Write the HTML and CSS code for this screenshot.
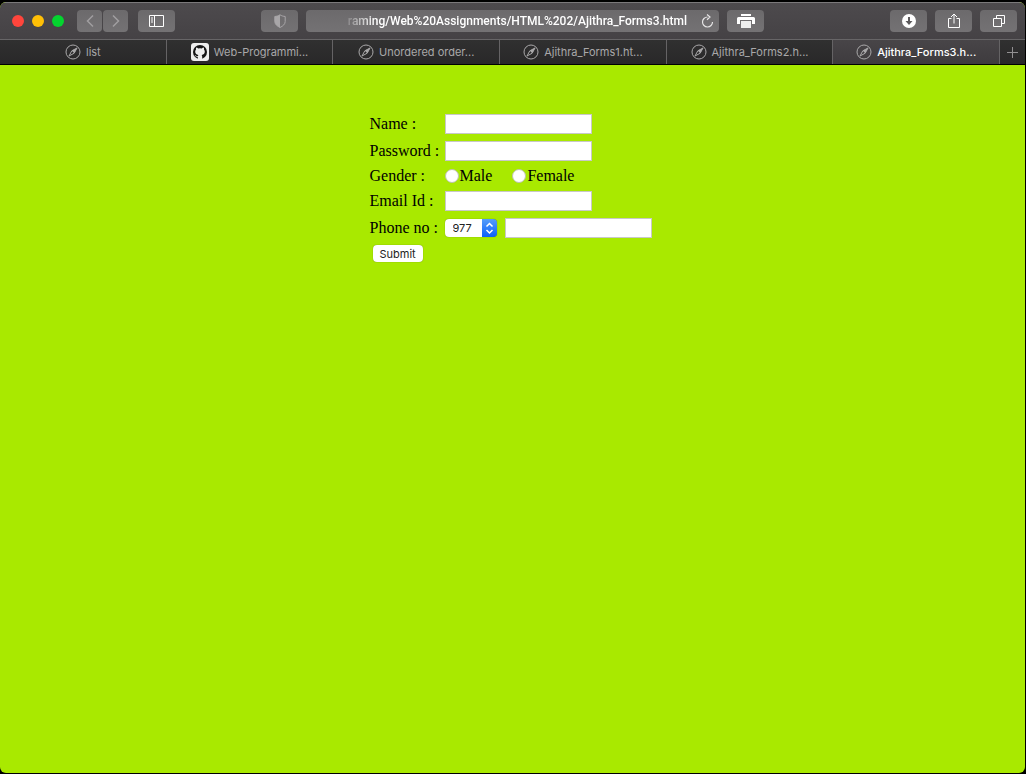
FILE: index.html
```html
<!DOCTYPE html>
<html lang="en">
<head>
<meta charset="utf-8">
<title>Ajithra_Forms3.html</title>
<link rel="stylesheet" href="styles.css">
</head>
<body>
<svg class="defs" aria-hidden="true">
  <symbol id="compass" viewBox="0 0 16 16">
    <circle cx="8" cy="8" r="7" fill="none" stroke="currentColor"/>
    <path d="M12 4 9.2 9.2 4 12 6.8 6.8Z" fill="none" stroke="currentColor"/>
    <path d="M12 4 6.8 6.8 9.2 9.2Z" fill="currentColor"/>
  </symbol>
</svg>
<div class="window">
  <header class="toolbar">
    <div class="group">
      <div class="lights"><span class="light red"></span><span class="light yellow"></span><span class="light green"></span></div>
      <div class="nav">
        <button class="tool nav-tool" aria-label="Back"><svg width="10" height="14" viewBox="0 0 10 14"><path d="M8 1.5 2.5 7 8 12.5" fill="none" stroke="#a09ea0" stroke-width="1.5"/></svg></button>
        <button class="tool nav-tool" aria-label="Forward"><svg width="10" height="14" viewBox="0 0 10 14"><path d="M2 1.5 7.5 7 2 12.5" fill="none" stroke="#a09ea0" stroke-width="1.5"/></svg></button>
      </div>
      <button class="tool" aria-label="Sidebar"><svg width="15" height="12" viewBox="0 0 15 12"><path d="M.5.5h14v11H.5zM5.5.5v11M2 3h2M2 5h2M2 7h2" fill="none" stroke="#fff"/></svg></button>
    </div>
    <div class="center">
      <button class="tool" aria-label="Privacy report"><svg width="14" height="14" viewBox="0 0 14 14"><path d="M7 .8c1.6 1.1 3.3 1.5 5.2 1.7v5c0 2.6-2.2 4.6-5.2 6-3-1.4-5.2-3.4-5.2-6v-5C3.7 2.3 5.4 1.9 7 .8Z" fill="none" stroke="#a8a6a8"/><path d="M7 .8C5.4 1.9 3.7 2.3 1.8 2.5v5c0 2.6 2.2 4.6 5.2 6Z" fill="#a8a6a8"/></svg></button>
      <div class="address">
        <span class="url">raming/Web%20Assignments/HTML%202/Ajithra_Forms3.html</span>
        <button class="reload" aria-label="Reload"><svg width="13" height="14" viewBox="0 0 13 14"><path d="M6.5 3A5 5 0 1 0 11.5 8M6 .5 9 3 6 5.8" fill="none" stroke="#e6e5e6" stroke-width="1.2"/></svg></button>
      </div>
      <button class="tool" aria-label="Print"><svg width="18" height="14" viewBox="0 0 18 14"><path d="M4 0h10v2H4zM1.5 3h15q1.5 0 1.5 1.5V10h-3V6H3v4H0V4.5Q0 3 1.5 3Z" fill="#fff"/><path d="M4 7h10v7H4z" fill="#eee"/></svg></button>
    </div>
    <div class="group right">
      <button class="tool" aria-label="Downloads"><svg width="14" height="14" viewBox="0 0 14 14"><circle cx="7" cy="7" r="7" fill="#fff"/><path d="M7 3v5" stroke="#5c5a5c" stroke-width="2"/><path d="M3.5 7h7L7 11Z" fill="#5c5a5c"/></svg></button>
      <button class="tool" aria-label="Share"><svg width="12" height="16" viewBox="0 0 12 16"><path d="M3.5 5.5h-3v9h11v-9h-3M6 10.5V1M3 4l3-3 3 3" fill="none" stroke="#fff"/></svg></button>
      <button class="tool" aria-label="Show all tabs"><svg width="12" height="12" viewBox="0 0 12 12"><path d="M.5 3.5h8v8h-8zM3.5 3V.5h8v8H9" fill="none" stroke="#fff"/></svg></button>
    </div>
  </header>
  <nav class="tabs" aria-label="Tabs">
    <a class="tab" href="#"><svg class="icon"><use href="#compass"/></svg>list</a>
    <a class="tab" href="#"><svg class="github" viewBox="0 0 18 18"><rect width="18" height="18" rx="3" fill="#eee"/><circle cx="9" cy="9" r="7" fill="#141414"/><path d="M6.8 16v-2.2c-2 .3-2.5-1-3.2-1.5 1.3-.2 1.4 1 3.3.7.1-.5.3-.8.5-1C5 11.7 4.2 10.4 4.2 8.500c0-.8.3-1.5.8-2-.2-.8 0-1.5.2-2 .8 0 1.5.5 2 .9a8 8 0 0 1 3.6 0c.5-.4 1.200-.9 2-.9.2.5.4 1.2.2 2 .5.5.8 1.2.8 2 0 1.900-.8 3.200-3.200 3.500.4.4.6.9.6 1.700V16Z" fill="#eee"/></svg>Web-Programmi...</a>
    <a class="tab" href="#"><svg class="icon"><use href="#compass"/></svg>Unordered order...</a>
    <a class="tab" href="#"><svg class="icon"><use href="#compass"/></svg>Ajithra_Forms1.ht...</a>
    <a class="tab" href="#"><svg class="icon"><use href="#compass"/></svg>Ajithra_Forms2.h...</a>
    <a class="tab active" href="#" aria-current="page"><svg class="icon"><use href="#compass"/></svg>Ajithra_Forms3.h...</a>
    <button class="new-tab" aria-label="New tab"><svg width="11" height="11" viewBox="0 0 11 11"><path d="M5.5 0v11M0 5.5h11" stroke="#929092"/></svg></button>
  </nav>
  <main class="page">
    <form class="form">
      <div class="row"><label class="label" for="name">Name :</label><input class="field" id="name" type="text"></div>
      <div class="row"><label class="label" for="password">Password :</label><input class="field" id="password" type="password"></div>
      <div class="row gender" role="radiogroup" aria-labelledby="gender"><span class="label" id="gender">Gender :</span>
        <label class="choice"><input class="radio" type="radio" name="gender">Male</label>
        <label class="choice"><input class="radio" type="radio" name="gender">Female</label>
      </div>
      <div class="row"><label class="label" for="email">Email Id :</label><input class="field" id="email" type="text"></div>
      <div class="row"><label class="label" for="phone">Phone no :</label>
        <select class="code" aria-label="Country code"><option>977</option></select>
        <input class="field" id="phone" type="text">
      </div>
      <div class="row actions"><button class="submit" type="button">Submit</button></div>
    </form>
  </main>
</div>
</body>
</html>
```
FILE: styles.css
```css
* { box-sizing: border-box; }
body { margin: 0; background: #000; font-family: Inter, "Liberation Sans", sans-serif; }
button, input, select { margin: 0; font-family: inherit; }
.defs { display: none; }
.window {
  display: flex;
  flex-direction: column;
  min-height: calc(100vh - 3px);
  margin: 2px 1px 1px 0;
  border-radius: 6px;
  overflow: hidden;
  background: #a9e900;
}
.toolbar {
  display: grid;
  grid-template-columns: 1fr minmax(0, 503px) 1fr;
  align-items: center;
  height: 38px;
  padding: 0 8px;
  border-top: 1px solid #7b797b;
  border-bottom: 1px solid #676567;
  background: linear-gradient(#4d4a4d, #454245);
}
.group, .center, .lights, .nav { display: flex; align-items: center; }
.group { gap: 10px; }
.center { gap: 8px; }
.right { gap: 8px; justify-content: flex-end; }
.lights { gap: 8px; padding: 0 3px 0 4px; }
.light { width: 12px; height: 12px; border-radius: 50%; }
.red { background: #ff453c; }
.yellow { background: #ffbf06; }
.green { background: #04d42f; }
.nav { gap: 1px; }
.tool {
  display: flex;
  flex: none;
  align-items: center;
  justify-content: center;
  width: 37px;
  height: 22px;
  padding: 0;
  border: 0;
  border-radius: 4px;
  background: linear-gradient(#6c6a6c, #747274);
}
.nav-tool { width: 25px; }
.address {
  display: flex;
  flex: 1;
  align-items: center;
  justify-content: flex-end;
  gap: 14px;
  min-width: 0;
  height: 22px;
  padding: 0 5px 0 12px;
  border-radius: 4px;
  background: linear-gradient(#6c6a6c, #747274);
}
.url {
  display: flex;
  justify-content: flex-end;
  min-width: 0;
  overflow: hidden;
  color: #fff;
  font-family: Roboto, sans-serif;
  font-size: 12px;
  font-weight: 500;
  line-height: 22px;
  white-space: nowrap;
  mask-image: linear-gradient(to right, rgba(0, 0, 0, 0.2), #000 28px);
}
.reload { display: flex; padding: 0; border: 0; background: none; }
.tabs {
  display: flex;
  height: 25px;
  border-bottom: 1px solid #000;
  background: linear-gradient(#303030, #292829);
}
.tab {
  display: flex;
  flex: 1;
  align-items: center;
  justify-content: center;
  gap: 5px;
  min-width: 0;
  border-right: 1px solid #656365;
  color: #a9a8a9;
  font-size: 11px;
  text-decoration: none;
  white-space: nowrap;
}
.active { background: linear-gradient(#484548, #3e3b3e); color: #fff; font-weight: 500; }
.icon { width: 16px; height: 16px; color: #a9a8a9; }
.github { width: 18px; height: 18px; }
.new-tab {
  display: flex;
  align-items: center;
  justify-content: center;
  width: 25px;
  padding: 0;
  border: 0;
  background: none;
}
.page { flex: 1; padding: 45px 16px 16px; }
.form {
  width: fit-content;
  margin: 0 auto;
  padding-right: 4px;
  color: #000;
  font-family: "Liberation Serif", serif;
  font-size: 16px;
}
.row { display: flex; align-items: center; height: 27px; }
.gender { height: 23px; }
.actions { height: 25px; }
.label { width: 75px; }
.field {
  width: 147px;
  height: 20px;
  padding: 1px 3px;
  border: 1px solid #c8c8c8;
  background: #fff;
}
.choice { display: flex; align-items: center; gap: 1px; margin-right: 20px; }
.radio {
  width: 14px;
  height: 14px;
  appearance: none;
  border: 1px solid #bdc2ae;
  border-radius: 50%;
  background: #fff;
}
.radio:checked { border: 4px solid #1d72f5; }
.code {
  width: 52px;
  height: 18px;
  margin-right: 8px;
  padding: 0 16px 0 8px;
  appearance: none;
  border: 0;
  border-radius: 4px;
  background:
    url("data:image/svg+xml,%3Csvg xmlns='http://www.w3.org/2000/svg' width='15' height='18'%3E%3Cpath d='M4.5 7.5l3-3 3 3M4.5 11l3 3 3-3' fill='none' stroke='white' stroke-width='1.5'/%3E%3C/svg%3E") right / 15px 18px no-repeat,
    linear-gradient(#559dfa, #0c61fa) right / 15px 18px no-repeat,
    #fff;
  box-shadow: 0 0 1px rgba(70, 90, 20, 0.8);
  color: #222;
  font-family: Inter, sans-serif;
  font-size: 11px;
}
.submit {
  height: 17px;
  margin-left: 3px;
  padding: 0 7px;
  border: 0;
  border-radius: 4px;
  background: #fff;
  box-shadow: 0 0 1px rgba(70, 90, 20, 0.8);
  color: #222;
  font-family: Inter, sans-serif;
  font-size: 11px;
}
```
